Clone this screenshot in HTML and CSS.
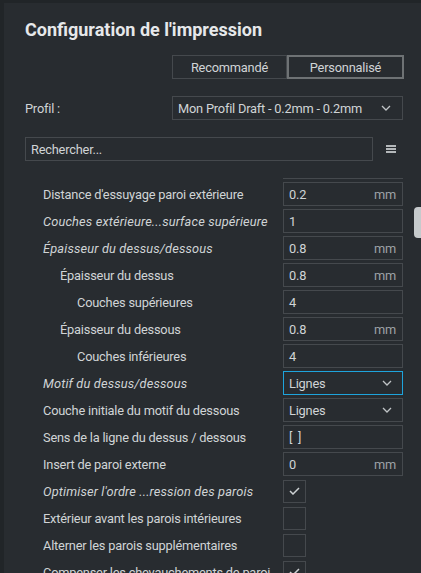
FILE: index.html
```html
<!DOCTYPE html>
<html lang="fr">
<head>
<meta charset="utf-8">
<title>Configuration de l'impression</title>
<link rel="stylesheet" href="styles.css">
</head>
<body>
<div class="panel">
  <h1 class="title">Configuration de l'impression</h1>
  <div class="tabs">
    <div class="tab">Recommandé</div>
    <div class="tab active">Personnalisé</div>
  </div>
  <div class="profile-row">
    <span class="profile-label">Profil :</span>
    <div class="select profile-select"><span>Mon Profil Draft - 0.2mm - 0.2mm</span><svg class="chev" viewBox="0 0 10 6" width="10" height="6"><polyline points="1,1 5,5 9,1"/></svg></div>
  </div>
  <div class="search-row">
    <div class="search">Rechercher...</div>
    <div class="menu-icon"><span></span><span></span><span></span></div>
  </div>
  <div class="list">
    <div class="list-inner">
      <div class="row-stub"></div>
      <div class="row"><span class="label">Distance d'essuyage paroi extérieure</span><div class="field"><span>0.2</span><span class="unit">mm</span></div></div>
      <div class="row"><span class="label it">Couches extérieure...surface supérieure</span><div class="field"><span>1</span></div></div>
      <div class="row"><span class="label it">Épaisseur du dessus/dessous</span><div class="field"><span>0.8</span><span class="unit">mm</span></div></div>
      <div class="row"><span class="label l1">Épaisseur du dessus</span><div class="field"><span>0.8</span><span class="unit">mm</span></div></div>
      <div class="row"><span class="label l2">Couches supérieures</span><div class="field"><span>4</span></div></div>
      <div class="row"><span class="label l1">Épaisseur du dessous</span><div class="field"><span>0.8</span><span class="unit">mm</span></div></div>
      <div class="row"><span class="label l2">Couches inférieures</span><div class="field"><span>4</span></div></div>
      <div class="row"><span class="label it">Motif du dessus/dessous</span><div class="field select focus"><span>Lignes</span><svg class="chev" viewBox="0 0 10 6" width="10" height="6"><polyline points="1,1 5,5 9,1"/></svg></div></div>
      <div class="row"><span class="label">Couche initiale du motif du dessous</span><div class="field select"><span>Lignes</span><svg class="chev" viewBox="0 0 10 6" width="10" height="6"><polyline points="1,1 5,5 9,1"/></svg></div></div>
      <div class="row"><span class="label">Sens de la ligne du dessus / dessous</span><div class="field"><span class="brackets">[ ]</span></div></div>
      <div class="row"><span class="label">Insert de paroi externe</span><div class="field"><span>0</span><span class="unit">mm</span></div></div>
      <div class="row"><span class="label it">Optimiser l'ordre ...ression des parois</span><div class="check"><svg viewBox="0 0 11 8" width="11" height="8"><polyline points="1,4 4,7 10,1"/></svg></div></div>
      <div class="row"><span class="label">Extérieur avant les parois intérieures</span><div class="check"></div></div>
      <div class="row"><span class="label">Alterner les parois supplémentaires</span><div class="check"></div></div>
      <div class="row"><span class="label">Compenser les chevauchements de paroi</span><div class="check"><svg viewBox="0 0 11 8" width="11" height="8"><polyline points="1,4 4,7 10,1"/></svg></div></div>
    </div>
    <div class="scroll-thumb"></div>
  </div>
</div>
</body>
</html>
```
FILE: styles.css
```css
* { box-sizing: border-box; }
html, body { margin: 0; padding: 0; }
body {
  background: #212528;
  width: 421px;
  height: 573px;
  overflow: hidden;
  font-family: Roboto, "Noto Sans", sans-serif;
  font-size: 12.8px;
  letter-spacing: -0.2px;
  color: #d0d4d6;
}
.panel {
  margin: 3px 0 0 4px;
  height: 570px;
  background: #282c30;
  padding: 0 0 0 21px;
  overflow: hidden;
}
.title {
  margin: 0;
  padding-top: 15px;
  height: 52px;
  font-size: 18px;
  font-weight: 700;
  letter-spacing: 0;
  line-height: 24px;
  color: #e6e8ea;
}
.tabs {
  display: flex;
  margin-left: 147px;
  width: 232px;
  height: 24px;
}
.tab {
  flex: 1;
  border: 1px solid #45494d;
  display: flex;
  align-items: center;
  justify-content: center;
  color: #d0d4d6;
}
.tab.active { border: 2px solid #6e7274; }
.profile-row {
  display: flex;
  align-items: center;
  margin-top: 17px;
  height: 24px;
  padding-right: 18px;
}
.profile-label { width: 147px; }
.select {
  display: flex;
  align-items: center;
  justify-content: space-between;
  white-space: nowrap;
}
.profile-select {
  flex: 1;
  height: 24px;
  border: 1px solid #45494d;
  padding: 0 11px 0 5px;
}
.chev { fill: none; stroke: #c0c4c6; stroke-width: 1.3; }
.search-row {
  display: flex;
  align-items: center;
  margin-top: 17px;
  height: 24px;
}
.search {
  width: 348px;
  height: 24px;
  border: 1px solid #45494d;
  display: flex;
  align-items: center;
  padding-left: 5px;
}
.menu-icon {
  margin-left: 13px;
  width: 10px;
  display: flex;
  flex-direction: column;
  gap: 1px;
}
.menu-icon span { display: block; height: 2px; background: #b4b8ba; }
.list {
  position: relative;
  margin-top: 17px;
  height: 400px;
  overflow: hidden;
}
.list-inner {
  display: flex;
  flex-direction: column;
  gap: 3px;
}
.row-stub {
  height: 1px;
  width: 120px;
  margin-left: 258px;
  background: #45494d;
}
.row {
  display: flex;
  align-items: center;
  height: 24px;
  padding-left: 18px;
}
.label { flex: 1; white-space: nowrap; overflow: hidden; }
.label.it { font-style: italic; letter-spacing: 0.15px; }
.label.l1 { padding-left: 17px; }
.label.l2 { padding-left: 34px; }
.field {
  width: 120px;
  height: 24px;
  border: 1px solid #45494d;
  margin-right: 18px;
  display: flex;
  align-items: center;
  justify-content: space-between;
  padding: 0 6px 0 5px;
}
.field.select { padding-right: 10px; }
.field.focus { border-color: #1ea4dc; }
.brackets { letter-spacing: 1.2px; }
.unit { color: #9ea2a6; }
.check {
  width: 23px;
  height: 23px;
  border: 1px solid #45494d;
  margin-right: 115px;
  display: flex;
  align-items: center;
  justify-content: center;
}
.check svg { fill: none; stroke: #cdd1d3; stroke-width: 1.5; }
.scroll-thumb {
  position: absolute;
  right: 0;
  top: 29px;
  width: 7px;
  height: 31px;
  border-radius: 4px 0 0 4px;
  background: #c6cacc;
}
```
